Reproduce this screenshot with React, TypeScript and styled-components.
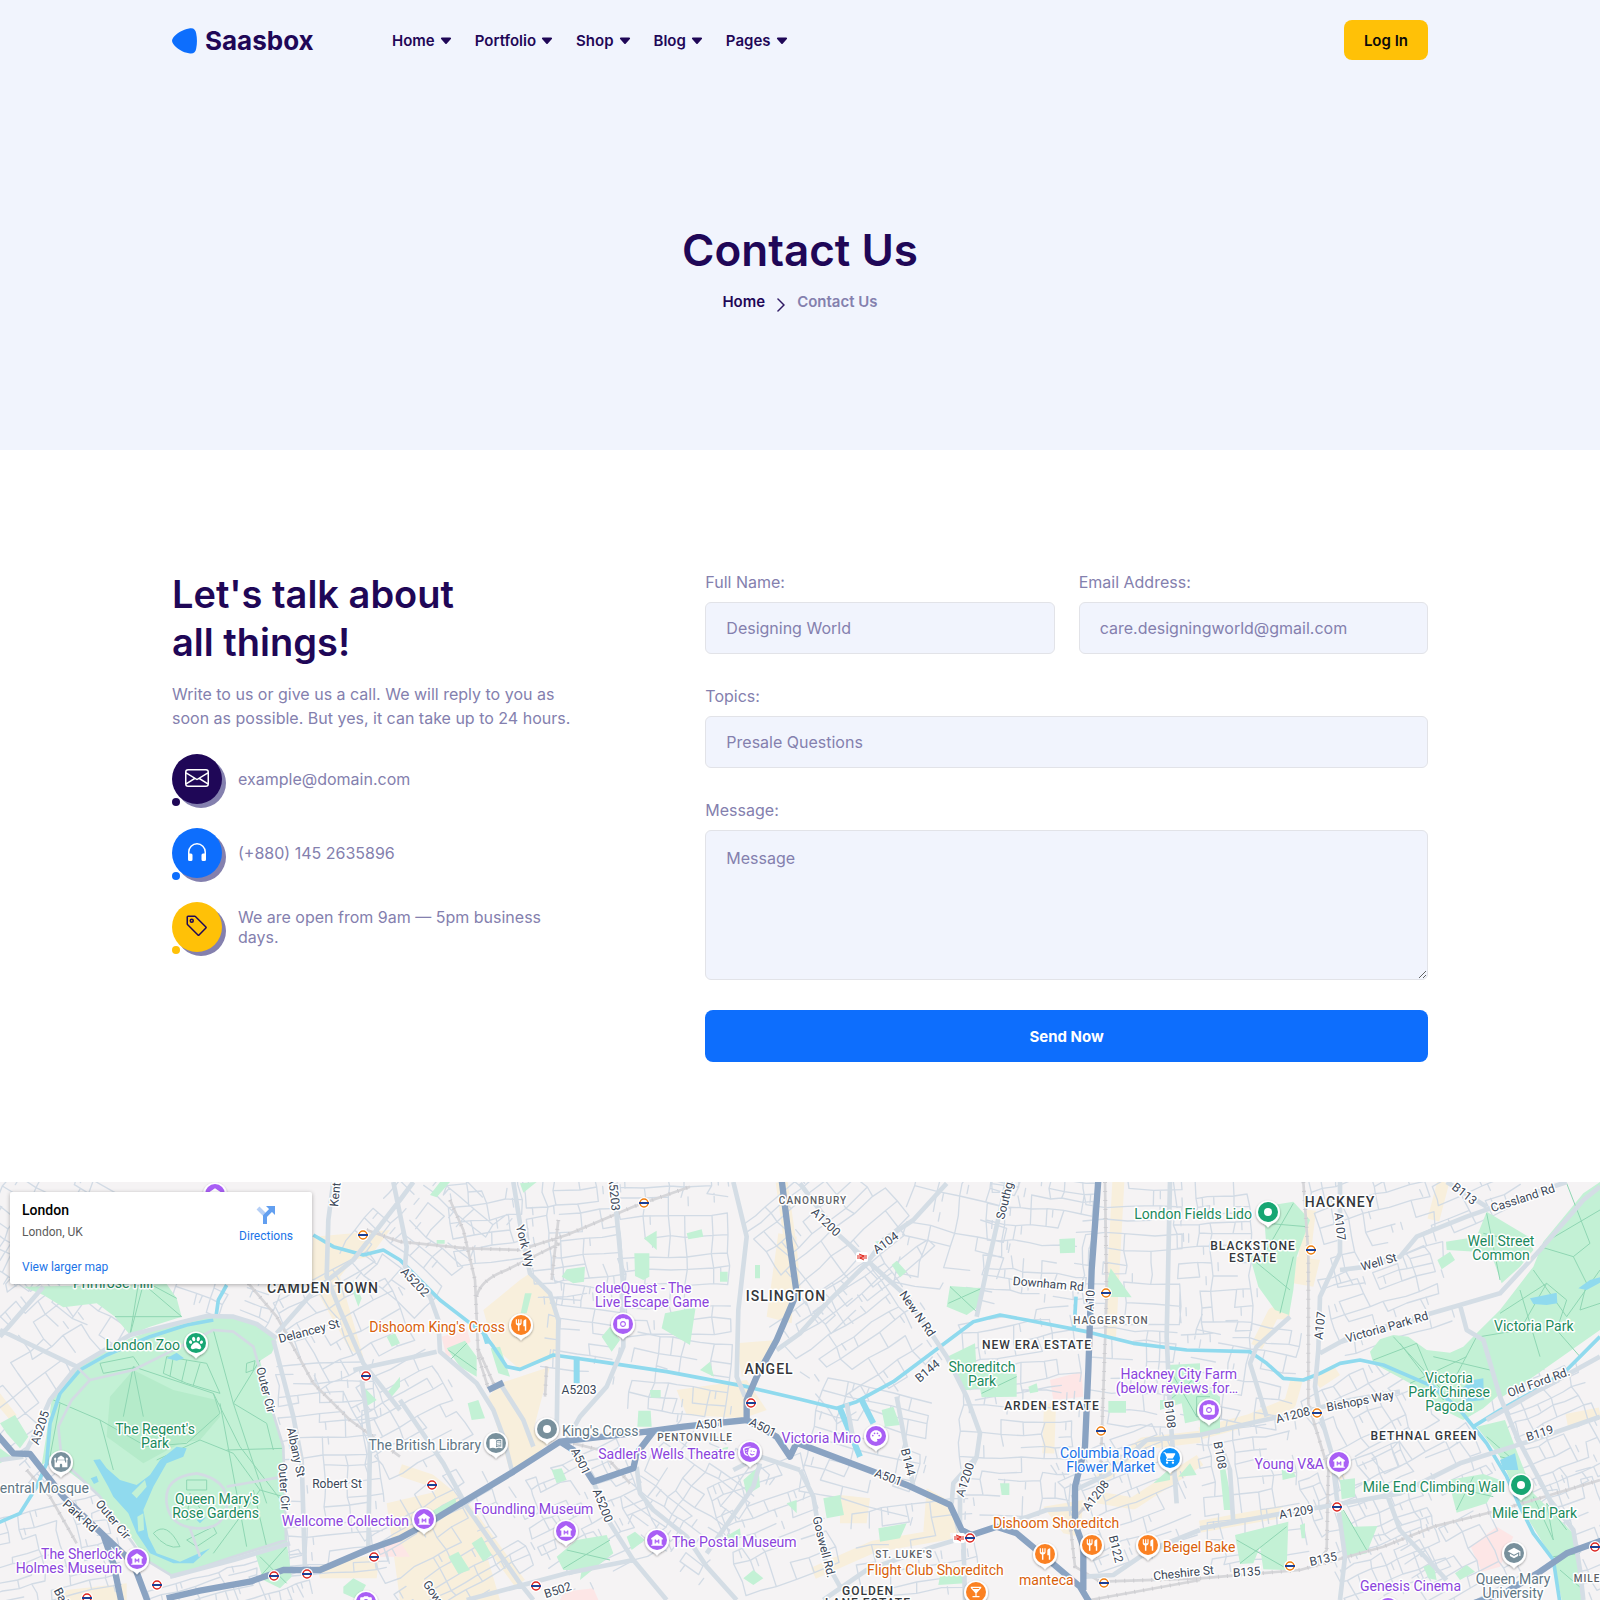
import React from "react";
import styled, { createGlobalStyle } from "styled-components";
import {
  BsCaretDownFill,
  BsChevronRight,
  BsEnvelope,
  BsHeadphones,
  BsTag,
} from "react-icons/bs";
import {
  MdLocalBar,
  MdMenuBook,
  MdMosque,
  MdMuseum,
  MdPalette,
  MdPhotoCamera,
  MdRestaurant,
  MdSchool,
  MdShoppingCart,
} from "react-icons/md";
import { FaPaw, FaTheaterMasks } from "react-icons/fa";
import type { IconType } from "react-icons";

const color = {
  ink: "#1f0757",
  muted: "#8480ae",
  wash: "#f1f4fd",
  blue: "#0d6efd",
  yellow: "#ffc107",
  line: "#e2e3e8",
};

const GlobalStyle = createGlobalStyle`
  * { box-sizing: border-box; }
  body {
    margin: 0;
    background: #fff;
    color: ${color.muted};
    font-family: Inter, "Liberation Sans", sans-serif;
    font-size: 16px;
    line-height: 24px;
  }
  h1, h2, p, ul, ol { margin: 0; padding: 0; }
  ul, ol { list-style: none; }
  a { color: inherit; text-decoration: none; }
`;

const Container = styled.div`
  width: 100%;
  max-width: 1280px;
  margin: 0 auto;
  padding: 0 12px;
`;

/* ---------- header ---------- */

const Header = styled.header`
  background: ${color.wash};
`;

const Bar = styled(Container)`
  display: flex;
  align-items: center;
  min-height: 80px;
`;

const Brand = styled.a`
  display: flex;
  align-items: center;
  gap: 8px;
  width: 220px;
  padding-top: 2px;
  color: ${color.ink};
  font-size: 26px;
  font-weight: 700;
  line-height: 32px;
`;

const NavList = styled.ul`
  display: flex;
  gap: 22px;
`;

const NavLink = styled.a`
  display: flex;
  align-items: center;
  gap: 4px;
  padding-top: 2px;
  color: ${color.ink};
  font-size: 15px;
  font-weight: 600;
`;

const LoginButton = styled.button`
  height: 40px;
  margin-left: auto;
  padding: 2px 20px 0;
  border: 0;
  border-radius: 8px;
  background: ${color.yellow};
  color: #0b0b0b;
  font: inherit;
  font-size: 15px;
  font-weight: 600;
`;

/* ---------- page title ---------- */

const Hero = styled.section`
  display: flex;
  flex-direction: column;
  align-items: center;
  gap: 10px;
  padding: 140px 12px 136px;
  background: ${color.wash};
  text-align: center;
`;

const Title = styled.h1`
  color: ${color.ink};
  font-size: 44px;
  font-weight: 600;
  line-height: 60px;
`;

const Crumbs = styled.ol`
  display: flex;
  align-items: center;
  gap: 8px;
  font-size: 15px;
  font-weight: 600;
  color: ${color.muted};

  a { color: ${color.ink}; }
  svg { display: block; margin-top: 6px; color: ${color.ink}; stroke: currentColor; stroke-width: 0.5px; }
`;

/* ---------- contact section ---------- */

const Contact = styled(Container)`
  display: grid;
  grid-template-columns: repeat(12, minmax(0, 1fr));
  column-gap: 24px;
  padding-top: 120px;
  padding-bottom: 120px;
`;

const Intro = styled.section`
  grid-column: span 5;
`;

const Heading = styled.h2`
  margin-bottom: 16px;
  color: ${color.ink};
  font-size: 38px;
  font-weight: 600;
  line-height: 48px;
`;

const Lead = styled.p`
  max-width: 400px;
  margin-bottom: 24px;
`;

const ContactList = styled.ul`
  display: grid;
  gap: 24px;
  max-width: 380px;
`;

const ContactRow = styled.li`
  display: flex;
  align-items: center;
  gap: 16px;
  line-height: 20px;
`;

const Badge = styled.span<{ $fill: string; $ink?: string }>`
  position: relative;
  display: grid;
  place-items: center;
  flex: none;
  width: 50px;
  height: 50px;
  border-radius: 50%;
  background: ${(p) => p.$fill};
  box-shadow: 4px 4px 0 ${color.muted};
  color: ${(p) => p.$ink ?? "#fff"};
  font-size: 24px;

  svg { display: block; margin-bottom: 2px; }

  &::after {
    content: "";
    position: absolute;
    left: 0;
    bottom: -2px;
    width: 8px;
    height: 8px;
    border-radius: 50%;
    background: ${(p) => p.$fill};
  }
`;

const Form = styled.form`
  grid-column: span 7;
  display: grid;
  grid-template-columns: 1fr 1fr;
  column-gap: 24px;
  row-gap: 30px;
`;

const Field = styled.div<{ $wide?: boolean }>`
  display: flex;
  flex-direction: column;
  gap: 8px;
  min-width: 0;
  grid-column: ${(p) => (p.$wide ? "1 / -1" : "auto")};
`;

const controlStyle = `
  width: 100%;
  padding: 15px 20px;
  border: 1px solid ${color.line};
  border-radius: 6px;
  outline: 0;
  background: ${color.wash};
  color: ${color.ink};
  font: inherit;

  &::placeholder { color: ${color.muted}; opacity: 1; }
`;

const Input = styled.input`
  ${controlStyle}
  height: 52px;
`;

const TextArea = styled.textarea`
  ${controlStyle}
  display: block;
  height: 150px;
  resize: vertical;
`;

const SendButton = styled.button`
  grid-column: 1 / -1;
  height: 52px;
  padding: 2px 20px 0;
  border: 0;
  border-radius: 8px;
  background: ${color.blue};
  color: #fff;
  font: inherit;
  font-size: 15px;
  font-weight: 700;
`;

/* ---------- map ---------- */

const MapFrame = styled.section`
  position: relative;
  height: 418px;
  overflow: hidden;
  background: #f5f3f4;
  font-family: Roboto, "Liberation Sans", sans-serif;
`;

const MapDrawing = styled.svg`
  display: block;
  width: 100%;
  height: 100%;
`;

const MapText = styled.text<{ $size: number; $weight: number; $track: number }>`
  font-size: ${(p) => p.$size}px;
  font-weight: ${(p) => p.$weight};
  letter-spacing: ${(p) => p.$track}px;
  paint-order: stroke;
  stroke: #fff;
  stroke-width: 3px;
  stroke-linejoin: round;
`;

const MapCard = styled.div`
  position: absolute;
  top: 10px;
  left: 10px;
  display: flex;
  justify-content: space-between;
  width: 302px;
  min-height: 92px;
  padding: 9px 19px 9px 12px;
  border-radius: 2px;
  background: #fff;
  box-shadow: 0 1px 4px rgba(0, 0, 0, 0.3);
  font-size: 12px;
  line-height: 16px;
`;

const Place = styled.div`
  display: flex;
  flex-direction: column;
  color: #5b5b5b;

  strong { margin-bottom: 5px; color: #000; font-size: 14px; font-weight: 500; line-height: 18px; }
  a { margin-top: auto; color: #1a73e8; }
`;

const Directions = styled.a`
  display: flex;
  flex-direction: column;
  align-items: center;
  align-self: flex-start;
  gap: 2px;
  padding-top: 3px;
  color: #1a73e8;
`;

/* Terrain is plotted on a grid three times finer than the labels. */
const PARKS = [
  "M70 350L500 342L530 385L545 440L450 470L390 495L345 440L290 400L190 412L130 375Z",
  "M125 885L140 790L155 690L240 585L390 505L520 460L620 440L700 445L770 460L830 515L815 550L780 572L815 700L850 830L862 1120L700 1160L520 1220L440 1170L400 1110L280 960L200 900L150 870Z",
  "M765 1150L860 1115L875 1220L840 1255L790 1230Z",
  "M0 760L45 735L85 800L60 835L20 790Z M0 835L35 860L0 880Z",
  "M1095 655L1130 690L1095 712Z M1160 670L1200 620L1200 650L1175 680Z M1030 1250L1060 1225L1098 1245L1075 1290L1030 1270Z",
  "M1060 330L1085 385L1075 410L1060 370Z M1160 500L1185 490L1200 520L1175 530Z",
  "M1560 40L1610 36L1570 68Z M1290 75L1320 36L1350 36L1310 82Z M1310 210H1334V221H1310Z",
  "M1970 182V240L1932 205Z M1903 250H1948V320L1930 330L1905 318Z M1685 320L1700 298L1755 290L1752 335L1720 340Z",
  "M2060 190L2105 178L2110 200L2065 208Z M2160 305H2183V335H2160Z M2265 285H2280V325H2265Z",
  "M1995 430L2087 412L2070 525L1985 475Z M1805 500L1830 470L1860 510L1835 545Z M2100 600L2130 575L2142 620Z",
  "M1340 535L1395 512L1430 560L1430 620L1380 590Z M1472 535L1500 530L1530 620L1495 610Z M1575 370H1595L1580 430H1562Z",
  "M1915 722H1952L1955 770H1912Z M1950 660H1982V683H1952Z M1403 700L1435 690L1455 745L1415 750Z",
  "M1285 1030L1365 985L1375 1015L1310 1040Z M1655 900L1685 895L1700 930L1670 940Z",
  "M1670 1160L1730 1110L1820 1095L1840 1150L1740 1230L1745 1200L1690 1200Z",
  "M1415 1120L1445 1100L1475 1155L1450 1175Z M1345 1160L1375 1145L1410 1200L1375 1212Z",
  "M1880 1100L1905 1085L1935 1110L1895 1140Z M2140 840L2185 830L2175 870L2145 865Z M2230 930L2275 890L2280 950L2240 975Z",
  "M2150 1115L2220 1075L2222 1095L2160 1120Z M2230 1225L2260 1200L2290 1225L2260 1245Z M2360 1000L2390 990L2390 1030Z",
  "M3332 295L3395 382L3310 380Z M2850 348L2945 355L2935 410L2900 435L2840 410Z M3178 207L3225 205V248L3180 250Z",
  "M2842 560L2925 520L2930 605L3050 612L3050 680L2945 682L2940 655L2885 662Z M3325 693H3378V728H3325Z",
  "M2645 720L2680 710L2700 765L2655 770Z M2470 985L2520 975L2532 1035L2480 1045Z M2635 1075L2720 1060L2700 1105L2640 1115Z",
  "M2675 285L2690 272L2720 305L2700 322Z M3085 650L3110 640L3115 665L3090 670Z M2825 1190L2895 1188L2895 1240L2815 1245Z",
  "M3505 585L3600 580L3600 750L3555 760L3545 700L3480 720L3480 690H3510Z M3600 640L3660 680L3660 790L3600 795Z",
  "M3000 940H3028V975H3005Z M2625 215L2650 210L2660 240Z M3460 940L3510 895L3510 930Z M3535 920L3570 880L3590 915Z",
  "M3790 110L3880 95L3930 150L3890 260L3880 360L3867 435L3825 420L3775 350L3750 260L3800 240Z",
  "M4460 125L4585 200L4600 240L4560 290L4505 340L4480 270L4430 245L4340 240L4338 215L4430 200Z",
  "M4800 36L4750 70L4630 215L4600 290L4500 420L4430 490L4470 580L4505 682L4600 620L4800 480Z",
  "M4110 545L4140 508L4180 495L4225 500L4280 540L4350 548L4390 530L4430 490L4475 590L4502 670L4450 715L4390 750L4330 720L4230 640L4120 580Z",
  "M4430 770L4515 750L4545 830L4600 970L4720 1090L4750 1290L4685 1290L4660 1170L4580 1040L4500 860Z",
  "M3705 1095L3865 1055L3860 1200L3790 1198L3780 1130L3760 1180L3720 1182Z M4020 1010L4060 1070L4132 1068L4100 1150L4035 1165Z",
  "M4345 930L4450 912L4500 930L4460 1000L4370 1028Z M4020 930L4065 925V980L4025 988Z M4312 270L4350 245L4365 270L4325 298Z",
  "M4270 1190L4300 1180L4310 1230L4285 1225Z M3845 900L3875 895L3888 920L3848 930Z M4365 1210L4400 1185L4425 1205L4380 1230Z",
  "M3660 900L3675 890L3700 1020H3672Z M3600 1025L3630 1010Z M3900 1065L3915 1060V1105H3905Z",
];

const COMMERCIAL = [
  "M1450 420L1560 330L1590 310L1670 400L1680 560L1560 598L1480 530Z",
  "M1500 640L1650 590L1600 780L1680 790L1600 860L1530 905L1465 680Z",
  "M2030 660L2240 630L2300 720L2230 745L2060 735Z",
  "M2210 520L2330 510L2290 600L2225 620Z",
  "M2335 190L2390 200L2375 460L2300 440Z",
  "M2780 955L2860 1000L2885 1090L2770 1085Z",
  "M2520 975L2610 985L2600 1060L2520 1060Z",
  "M940 200L1170 180L1110 260L1060 270L1020 320L1090 560L1050 540L960 380L930 360Z",
  "M1160 1000L1330 960L1420 1020L1500 1290L1200 1290Z",
  "M3130 1010L3250 990L3240 1100L3190 1090Z",
  "M0 670L50 735L30 750L0 715Z",
  "M200 1260L380 1240L380 1290H180Z",
  "M950 1190L1140 1150L1130 1225L960 1225Z",
  "M3890 260L3960 270L3940 350L3880 340Z",
];

const HOSPITALS = [
  "M3150 630L3245 605L3250 680L3160 690Z",
  "M1325 500L1400 475L1412 515L1340 565Z",
  "M4412 1130L4490 1070L4540 1100L4500 1190L4445 1205Z",
  "M1690 1265L1780 1255L1795 1290H1680Z",
  "M1130 1130L1200 1115L1230 1160L1140 1160Z",
];

const SHOPPING_STREETS =
  "M2345 36L2372 230L2385 370 M1200 900L1290 930L1400 1020L1560 1240 M3355 36L3330 500 M3600 790L3750 750L3870 700L3890 630 M3600 1070L3850 1025 M3150 700L3145 850 M3870 430L3820 430L3770 530 M3990 860L4020 930 M3300 930L3430 820L3600 800 M3280 980L3400 1000L3600 870 M3930 120L3905 330 M3950 640L4010 600 M4300 150L4330 36 M4700 750L4800 730 M2440 1210L2620 1130L2850 1090";

const MAIN_ROADS =
  "M70 860L110 780L150 690L230 590L390 495L620 438L700 440L770 462L830 505 M830 490L940 365L1060 270L1200 90L1240 36 M1000 36L985 150L980 320L1020 420L1090 580L1200 720 M820 510L880 740L905 870L915 1200 M1085 630L1110 800L1105 1140 M1180 36L1220 230L1215 290L1290 380L1315 450L1320 545L1430 640L1480 720L1510 800L1535 900 M1060 600L1200 570L1310 545 M1540 36L1560 160L1590 310L1650 370L1675 450L1670 790 M1840 36L1855 190L1870 350L1870 530L1820 650L1740 740L1700 810 M2200 36L2240 200L2215 420L2210 620L2235 680 M1500 640L1570 750L1600 830 M1200 690L1330 880L1400 1010L1560 1240L1600 1290 M1780 935L1830 1060L1900 1170L2000 1290 M1910 890L1920 970L1960 1020L2060 1100L2120 1190L2210 1290 M2400 40L2510 190L2600 270L2710 370L2800 500L2840 560L2900 680L2940 790L2930 860L2860 940L2855 1000 M2930 860L2880 970L2880 1080 M2840 40L2740 150L2650 210L2600 280L2480 400L2400 490L2330 540 M3020 36L2960 300L2930 440 M3510 36L3500 500L3510 720L3530 1000 M4020 36L4020 250L3960 380L3955 540L3945 650L3960 730L3995 850L4010 980L4035 1160L4020 1290 M3225 960L3330 910L3440 810L3600 795L3750 760L3930 720L4050 690L4200 665 M3600 1075L3850 1030L4000 1005L4200 970L4380 880L4600 810L4800 740 M4020 300L4100 290L4200 260L4250 200L4400 140L4600 70L4700 36 M3960 550L4050 500L4380 405L4500 370L4620 240L4750 90L4800 50 M4380 405L4400 480L4450 510L4500 680L4550 800L4650 990L4720 1080L4740 1200L4750 1290 M2470 1290L2600 1200L2800 1130L2900 1100 M2400 900L2440 980L2470 1160L2520 1250L2560 1290 M3255 1220L3340 1215L3450 1140L3600 1080 M1400 1290L1700 1210L1900 1170 M0 480L230 590 M0 500L130 350 M0 870L70 860 M3870 440L3770 530L3750 580L3800 740 M3000 1070L3140 1020L3225 1015 M2200 900L2280 860L2400 900 M2120 1150L2260 950L2280 880 M2890 1100L2895 1290 M2690 680L2740 950 M4340 1230L4200 1080L4160 970 M4460 750L4600 670L4800 560 M4460 110L4380 60L4340 36 M3700 1060L3690 900L3660 820 M2540 700L2560 810 M510 1220L700 1170L870 1120";

const PARK_ROADS =
  "M230 590L270 630L400 600L560 520L640 480L700 485L760 530L780 600L850 830L858 1110L700 1160L520 1220L430 1165L300 980L185 870L175 770L215 690L270 630 M500 1000Q490 920 590 910Q690 930 680 1010Q670 1080 590 1075Q510 1070 500 1000 M680 950L850 920 M570 1075L600 1160";

const TRUNK_ROADS =
  "M-20 780L40 850L90 852L190 980L310 1095L400 1180L445 1300 M310 1095L340 1180L365 1300 M500 1285L600 1262L750 1235L850 1200L960 1200L1100 1140L1200 1105L1300 1050L1540 905L1680 815L1940 785L2050 770L2240 750L2240 690L2270 620L2330 510L2390 370L2370 230L2345 30 M2240 750L2330 800L2370 860L2390 818L2620 905L2720 945L2850 1005L2885 1080L2915 1095L2990 1070L3050 1090L3140 1165L3240 1250L3270 1300 M1680 815L1720 840L1780 935L1900 895L1910 850L1960 785 M3295 30L3275 300L3265 600L3255 830L3225 950L3225 1060L3250 1130L3250 1260 M4810 1110L4700 1150L4620 1205L4520 1265L4420 1300 M1465 660L1510 638";

const CANALS =
  "M940 195L1000 230L1090 255L1150 240L1200 270L1320 390L1450 490L1480 530L1520 590L1560 598L1660 555L1800 575L2000 605L2240 650L2400 688L2510 715L2570 695L2680 635L2820 530L2920 455L3000 435L3080 450L3260 485L3400 520L3560 540L3750 545L3800 580L3850 625L3910 630L3960 610L4020 580L4080 570L4150 585L4300 650L4380 720L4460 820L4520 920L4560 1010L4600 1090L4660 1170L4680 1300 M4420 770L4500 720L4600 665L4700 600L4800 500 M3228 380L3222 480 M-10 1060L60 1030L110 950L140 880L150 760L180 670L240 600L320 555L450 500L560 465L640 450 M648 440L655 390L680 345";

const BASINS = "M2520 715L2580 860 M2585 690L2620 760 M1730 560V640";

const LAKES = [
  "M320 895L360 930L410 945L450 915L480 870L530 830L560 835L550 860L500 880L460 950L430 1020L445 1100L470 1150L540 1175L630 1135L580 1180L520 1180L450 1150L410 1090L385 1030L340 980L325 950L280 870L300 868Z",
  "M4590 385L4670 368L4672 400L4640 405L4600 402Z",
  "M4735 355L4770 330L4800 322V338L4760 360Z",
  "M4420 630L4450 625L4452 690L4400 695L4370 665Z",
  "M4500 870L4545 850L4555 900L4510 900Z",
  "M272 925L290 918L296 935L282 942Z M500 565L530 548L552 565L530 572Z M590 1050L620 1040L600 1060Z",
  "M1445 490L1460 490L1475 520L1455 522Z",
];

const RAILWAYS =
  "M1100 180L1200 215L1400 235L1560 240L1700 195L1900 110L2070 50 M1350 90L1390 180L1425 330L1435 560L1465 655 M1435 540L1485 650 M1430 380Q1440 330 1520 300L1600 260L1680 220 M1675 150L1655 330 M745 340L830 440L940 640L1050 750L1200 860 M3910 36L3925 250L3925 700L3985 900L3980 1140L3950 1180 M3600 1225L3900 1200L4150 1130L4300 1070L4500 1020L4800 930 M3315 36L3320 370L3300 960L3210 1060L3225 1190L3300 1235L3600 1225 M80 900L150 980L230 1120 M1640 590L1635 680 M1720 820L1800 840L1890 940 M3270 1290L3600 1230";

const PARK_PATHS =
  "M345 440L545 440L430 342L390 495L415 342 M450 342L530 385 M400 590L370 740 M400 590L430 740 M400 590L640 670L720 830L850 1000 M640 480L700 700L800 1000 M700 700L780 570 M160 690L300 750L440 830L560 820L660 730L640 670 M300 750L340 900 M470 870L600 810L700 850L780 960L850 980 M780 960L640 1150 M660 700L740 1130 M760 960L800 1130 M300 580L400 560L420 590L310 610Z M500 560L620 580L660 670L560 640L490 610Z M520 560L510 620 M560 570L545 635 M600 580L580 645 M560 1110L640 1070L650 1090L590 1130Z M460 1090Q500 1050 540 1130Q500 1140 460 1090 M560 930H620V960H560Z M570 970L610 1030L560 1050Z M740 580L765 572L760 600L738 608Z M180 700L150 860 M700 700L800 760L820 840 M780 1160L860 1240 M860 1130L780 1220 M680 840L850 835 M4120 570L4250 520L4300 640 M4180 500L4380 720 M4200 520L4330 690L4430 500 M4300 560L4470 600 M4230 640L4400 560 M4620 230L4720 260L4770 220L4700 40 M4630 220L4800 120 M4500 430L4640 340L4700 390L4670 480L4740 560 M4600 300L4700 440L4800 300 M4560 360L4620 560 M4440 500L4560 480L4640 340 M4720 260L4760 340L4740 420L4800 400 M4450 190L4580 220 M4460 130L4500 330 M3800 240L3880 100 M3800 160L3920 170 M3870 360L3760 270 M3840 430L3880 260 M4460 800L4540 870L4500 860 M4600 980L4660 1110L4640 1000L4700 1080 M4660 1160L4740 1150 M4680 1200L4750 1260 M4350 950L4480 980 M4370 1020L4420 920 M2850 350L2935 430 M2845 400L2945 355 M2845 570L2890 650 M2945 670L3050 620 M1345 540L1430 600 M1400 520L1350 570 M1690 1195L1830 1110 M1700 1140L1830 1170 M3710 1110L3850 1190 M3720 1180L3860 1070 M4030 1020L4100 1140 M3510 600L3590 740 M3510 690L3600 610 M3630 680H3590V740H3650";

type District = [x: number, y: number, w: number, h: number, turn: number, step: number];

const DISTRICTS: District[] = [
  [110, 620, 420, 560, -38, 50],
  [220, 240, 560, 420, 32, 54],
  [660, 360, 340, 160, 22, 46],
  [90, 1180, 520, 300, -14, 40],
  [700, 1270, 520, 150, -16, 36],
  [1000, 900, 300, 640, -4, 44],
  [1040, 460, 330, 320, -28, 50],
  [1270, 200, 330, 420, 40, 48],
  [1250, 740, 320, 330, -28, 46],
  [1360, 1120, 460, 380, -30, 46],
  [1480, 160, 260, 320, -8, 52],
  [1740, 200, 300, 380, -6, 44],
  [1760, 480, 240, 260, 8, 42],
  [2040, 260, 360, 480, -2, 52],
  [2060, 640, 340, 260, 8, 44],
  [1770, 1040, 360, 360, -25, 42],
  [2090, 1000, 380, 400, 36, 46],
  [2350, 1080, 340, 400, -20, 46],
  [2530, 200, 420, 440, -40, 48],
  [2590, 500, 420, 360, -34, 46],
  [2620, 840, 380, 360, 14, 46],
  [2780, 1150, 420, 300, -8, 44],
  [2880, 200, 340, 460, 12, 52],
  [3130, 180, 340, 400, 6, 46],
  [3080, 560, 360, 260, -10, 44],
  [3050, 850, 340, 380, 2, 44],
  [3400, 240, 300, 480, 1, 50],
  [3400, 640, 280, 320, 3, 48],
  [3400, 1000, 360, 400, -22, 42],
  [3650, 260, 240, 480, -2, 48],
  [3730, 620, 320, 320, 10, 46],
  [3780, 980, 340, 420, -8, 44],
  [4140, 150, 360, 340, -16, 44],
  [4170, 400, 360, 260, -18, 46],
  [4420, 90, 300, 180, -24, 44],
  [4140, 750, 380, 320, -28, 48],
  [4150, 1060, 380, 420, -22, 42],
  [4400, 1180, 320, 260, -28, 46],
  [4680, 760, 320, 440, -24, 42],
  [4770, 1080, 180, 360, -20, 44],
  [4400, 870, 220, 200, -24, 48],
];

/* Lays a broken, slightly uneven lattice of side streets over one district. */
function streets([cx, cy, w, h, turn, step]: District): string {
  let seed = cx * 31 + cy * 17 + step;
  const next = () => {
    seed = (seed * 1103515245 + 12345) % 2147483648;
    return seed / 2147483648;
  };
  const cuts = (span: number, gap: number) => {
    const out: number[] = [];
    for (let v = -span / 2; v < span / 2; v += gap * (0.6 + next() * 0.9)) out.push(v);
    return out;
  };
  const us = cuts(w, step * 1.15);
  const vs = cuts(h, step * 0.85);
  const nodes = vs.map((v) =>
    us.map((u) => [u + (next() - 0.5) * step * 0.3, v + (next() - 0.5) * step * 0.22]),
  );
  const a = (turn * Math.PI) / 180;
  const place = ([u, v]: number[]) =>
    `${Math.round(cx + u * Math.cos(a) - v * Math.sin(a))} ${Math.round(cy + u * Math.sin(a) + v * Math.cos(a))}`;
  let d = "";
  for (let i = 0; i < vs.length; i++) {
    for (let j = 0; j < us.length; j++) {
      const p = nodes[i][j];
      if (j + 1 < us.length && next() < 0.74) d += `M${place(p)}L${place(nodes[i][j + 1])}`;
      if (i + 1 < vs.length && next() < 0.6) d += `M${place(p)}L${place(nodes[i + 1][j])}`;
      if (next() < 0.16) d += `M${place([p[0] + step * 0.4, p[1]])}l${Math.round(-Math.sin(a) * step * 0.5)} ${Math.round(Math.cos(a) * step * 0.5)}`;
    }
  }
  return d;
}

const SIDE_STREETS = DISTRICTS.map(streets).join("");

const tone = {
  park: "#1b8a5c",
  poi: "#8b44dc",
  food: "#d95f0b",
  civic: "#5f7785",
  shop: "#1a73e8",
  area: "#35383c",
  minor: "#5d6166",
  road: "#3a4657",
};

type Kind = keyof typeof tone;
type Anchor = "start" | "middle" | "end";
type Label = [text: string, x: number, y: number, kind: Kind, anchor?: Anchor, turn?: number];

const LABELS: Label[] = [
  ["Primrose Hill", 113, 118, "park", "middle"],
  ["London Zoo", 180, 180, "park", "end"],
  ["The Regent's", 155, 264, "park", "middle"],
  ["Park", 155, 278, "park", "middle"],
  ["Queen Mary's", 259, 334, "park", "end"],
  ["Rose Gardens", 259, 348, "park", "end"],
  ["Central Mosque", 89, 323, "civic", "end"],
  ["The Sherlock", 122, 389, "poi", "end"],
  ["Holmes Museum", 122, 403, "poi", "end"],
  ["Wellcome Collection", 409, 356, "poi", "end"],
  ["The British Library", 481, 280, "civic", "end"],
  ["Dishoom King's Cross", 505, 162, "food", "end"],
  ["clueQuest - The", 595, 123, "poi"],
  ["Live Escape Game", 595, 137, "poi"],
  ["King's Cross", 562, 266, "civic"],
  ["Sadler's Wells Theatre", 735, 289, "poi", "end"],
  ["Foundling Museum", 474, 344, "poi"],
  ["The Postal Museum", 672, 377, "poi"],
  ["Victoria Miro", 861, 273, "poi", "end"],
  ["Shoreditch", 982, 202, "park", "middle"],
  ["Park", 982, 216, "park", "middle"],
  ["London Fields Lido", 1252, 49, "park", "end"],
  ["Hackney City Farm", 1237, 209, "poi", "end"],
  ["(below reviews for…", 1238, 223, "poi", "end"],
  ["Columbia Road", 1155, 288, "shop", "end"],
  ["Flower Market", 1155, 302, "shop", "end"],
  ["Dishoom Shoreditch", 993, 358, "food"],
  ["Flight Club Shoreditch", 867, 405, "food"],
  ["manteca", 1019, 415, "food"],
  ["Beigel Bake", 1163, 382, "food"],
  ["Young V&A", 1324, 299, "poi", "end"],
  ["Genesis Cinema", 1360, 421, "poi"],
  ["Mile End Climbing Wall", 1505, 322, "park", "end"],
  ["Mile End Park", 1492, 348, "park"],
  ["Queen Mary", 1513, 414, "civic", "middle"],
  ["University", 1513, 428, "civic", "middle"],
  ["Victoria Park", 1494, 161, "park"],
  ["Victoria", 1449, 213, "park", "middle"],
  ["Park Chinese", 1449, 227, "park", "middle"],
  ["Pagoda", 1449, 241, "park", "middle"],
  ["Well Street", 1501, 76, "park", "middle"],
  ["Common", 1501, 90, "park", "middle"],
];

type Caps = [text: string, x: number, y: number, size: number, minor?: boolean];

const DISTRICT_NAMES: Caps[] = [
  ["CAMDEN TOWN", 323, 123, 14],
  ["ISLINGTON", 786, 131, 14],
  ["ANGEL", 769, 204, 14],
  ["HACKNEY", 1340, 37, 14],
  ["NEW ERA ESTATE", 1037, 179, 12],
  ["ARDEN ESTATE", 1052, 240, 12],
  ["BETHNAL GREEN", 1424, 270, 12],
  ["BLACKSTONE", 1253, 80, 12],
  ["ESTATE", 1253, 92, 12],
  ["GOLDEN", 868, 425, 12],
  ["LANE ESTATE", 868, 437, 12],
  ["CANONBURY", 813, 34, 10, true],
  ["PENTONVILLE", 695, 271, 10, true],
  ["HAGGERSTON", 1111, 154, 10, true],
  ["ST. LUKE'S", 904, 388, 10, true],
  ["MILE END", 1600, 412, 10, true],
];

const ROAD_NAMES: Label[] = [
  ["Kentish", 338, 37, "road", "start", -84],
  ["Delancey St", 310, 165, "road", "middle", -15],
  ["A5205", 44, 259, "road", "middle", -72],
  ["Outer Cir", 262, 221, "road", "middle", 76],
  ["Albany St", 292, 283, "road", "middle", 78],
  ["Outer Cir", 280, 317, "road", "middle", 86],
  ["Robert St", 337, 318, "road", "middle", 0],
  ["Outer Cir", 110, 352, "road", "middle", 50],
  ["Park Rd", 77, 349, "road", "middle", 42],
  ["Baker St", 64, 440, "road", "middle", 62],
  ["A5202", 412, 115, "road", "middle", 46],
  ["York Wy", 521, 77, "road", "middle", 76],
  ["A5203", 610, 24, "road", "middle", 84],
  ["A5203", 579, 224, "road", "middle", 0],
  ["A501", 710, 258, "road", "middle", -4],
  ["A501", 761, 261, "road", "middle", 26],
  ["A501", 577, 293, "road", "middle", 64],
  ["A5200", 599, 337, "road", "middle", 68],
  ["B502", 559, 424, "road", "middle", -18],
  ["Gower St", 436, 434, "road", "middle", 56],
  ["A1200", 823, 55, "road", "middle", 44],
  ["A104", 888, 76, "road", "middle", -36],
  ["Southgate Rd", 1004, 50, "road", "start", -76],
  ["New N Rd", 914, 146, "road", "middle", 55],
  ["B144", 930, 204, "road", "middle", -40],
  ["Downham Rd", 1048, 118, "road", "middle", 5],
  ["A10", 1094, 131, "road", "middle", -86],
  ["B144", 904, 293, "road", "middle", 76],
  ["A501", 887, 311, "road", "middle", 20],
  ["A1200", 969, 311, "road", "middle", -72],
  ["A1208", 1099, 328, "road", "middle", -52],
  ["Goswell Rd.", 820, 378, "road", "middle", 76],
  ["B122", 1112, 380, "road", "middle", 76],
  ["B108", 1166, 245, "road", "middle", 84],
  ["Cheshire St", 1184, 407, "road", "middle", -6],
  ["A107", 1336, 57, "road", "middle", 84],
  ["B113", 1462, 27, "road", "middle", 38],
  ["Cassland Rd", 1524, 32, "road", "middle", -18],
  ["Well St", 1380, 96, "road", "middle", -16],
  ["A107", 1324, 156, "road", "middle", -84],
  ["Victoria Park Rd", 1388, 161, "road", "middle", -16],
  ["Bishops Way", 1361, 235, "road", "middle", -11],
  ["A1208", 1294, 249, "road", "middle", -14],
  ["B108", 1216, 286, "road", "middle", 80],
  ["A1209", 1297, 346, "road", "middle", -10],
  ["B135", 1324, 393, "road", "middle", -12],
  ["B135", 1247, 406, "road", "middle", -4],
  ["Old Ford Rd.", 1540, 216, "road", "middle", -20],
  ["B119", 1541, 267, "road", "middle", -18],
];

const pinFill = {
  park: "#17a673",
  poi: "#a95ff5",
  food: "#fb8122",
  civic: "#78909c",
  shop: "#0f93fb",
};

type PinSpec = [x: number, y: number, kind: keyof typeof pinFill, Icon?: IconType];

const PINS: PinSpec[] = [
  [215, 24, "poi", MdMuseum],
  [196, 173, "park", FaPaw],
  [61, 292, "civic", MdMosque],
  [137, 389, "poi", MdMuseum],
  [366, 432, "poi", MdPhotoCamera],
  [424, 349, "poi", MdMuseum],
  [496, 273, "civic", MdMenuBook],
  [521, 155, "food", MdRestaurant],
  [623, 154, "poi", MdPhotoCamera],
  [547, 259, "civic"],
  [750, 282, "poi", FaTheaterMasks],
  [566, 361, "poi", MdMuseum],
  [657, 370, "poi", MdMuseum],
  [876, 266, "poi", MdPalette],
  [1268, 42, "park"],
  [1209, 240, "poi", MdPhotoCamera],
  [1170, 288, "shop", MdShoppingCart],
  [1045, 384, "food", MdRestaurant],
  [1092, 375, "food", MdRestaurant],
  [1148, 375, "food", MdRestaurant],
  [976, 422, "food", MdLocalBar],
  [1339, 292, "poi", MdMuseum],
  [1521, 315, "park"],
  [1514, 383, "civic", MdSchool],
  [1388, 438, "poi", MdMuseum],
];

type Stop = [x: number, y: number, ring: "#dc241f" | "#ee7c0e"];

const STOPS: Stop[] = [
  [366, 206, "#dc241f"],
  [157, 415, "#dc241f"],
  [87, 428, "#dc241f"],
  [274, 406, "#dc241f"],
  [307, 404, "#dc241f"],
  [374, 387, "#dc241f"],
  [432, 315, "#dc241f"],
  [536, 416, "#dc241f"],
  [751, 233, "#dc241f"],
  [970, 368, "#dc241f"],
  [1337, 337, "#dc241f"],
  [1595, 377, "#dc241f"],
  [363, 65, "#ee7c0e"],
  [644, 33, "#ee7c0e"],
  [1106, 123, "#ee7c0e"],
  [1101, 261, "#ee7c0e"],
  [1104, 413, "#ee7c0e"],
  [1311, 80, "#ee7c0e"],
  [1317, 243, "#ee7c0e"],
  [1290, 396, "#ee7c0e"],
];

const RAIL_STATIONS = [
  [862, 87],
  [959, 368],
];

function Pin({ spec }: { spec: PinSpec }) {
  const [x, y, kind, Icon] = spec;
  return (
    <g transform={`translate(${x} ${y})`}>
      <path
        d="M0 15.5C-2 12.500-6 11.500-8.500 9A12 12 0 1 1 8.500 9C6 11.500 2 12.500 0 15.500Z"
        fill="#fff"
        filter="url(#pin-shadow)"
      />
      <circle r="10" fill={pinFill[kind]} />
      {Icon ? <Icon x={-7} y={-7} size={14} color="#fff" /> : <circle r="4" fill="#fff" />}
    </g>
  );
}

function PlaceName({ label }: { label: Label }) {
  const [text, x, y, kind, anchor = "start", turn = 0] = label;
  return (
    <MapText
      x={x}
      y={y}
      fill={tone[kind]}
      textAnchor={anchor}
      transform={turn ? `rotate(${turn} ${x} ${y})` : undefined}
      $size={kind === "road" ? 12 : 14}
      $weight={400}
      $track={0}
    >
      {text}
    </MapText>
  );
}

function LondonMap() {
  return (
    <MapDrawing viewBox="0 12 1600 418" preserveAspectRatio="xMidYMid slice" role="img" aria-label="Map of London">
      <defs>
        <filter id="pin-shadow" x="-30%" y="-30%" width="160%" height="170%">
          <feDropShadow dx="0" dy="1" stdDeviation="1" floodOpacity="0.4" />
        </filter>
      </defs>
      <g transform="scale(0.333333)" fill="none" strokeLinejoin="round">
        <path d={COMMERCIAL.join("")} fill="#f8efdc" />
        <path d={HOSPITALS.join("")} fill="#fde6e6" />
        <path d={SHOPPING_STREETS} stroke="#f8efdc" strokeWidth="36" />
        <path d={SIDE_STREETS} stroke="#d2dbe5" strokeWidth="4" strokeLinecap="round" />
        <path d={PARKS.join("")} fill="#c3f1d5" />
        <path d="M330 680L400 600L520 660L650 690L660 740L600 810L540 820L430 880L320 800Z" fill="#b5ebca" />
        <path d={PARK_PATHS} stroke="#8fd6b3" strokeWidth="3" />
        <path d={RAILWAYS} stroke="#d6d6d9" strokeWidth="8" />
        <path d={RAILWAYS} stroke="#cdcdd1" strokeWidth="12" strokeDasharray="3 24" />
        <path d={CANALS} stroke="#90daee" strokeWidth="11" />
        <path d={BASINS} stroke="#90daee" strokeWidth="18" />
        <path d={LAKES.join("")} fill="#90daee" />
        <path d="M395 970L435 930L440 950L410 985Z M412 1040L430 1030L432 1080L415 1085Z" fill="#c3f1d5" />
        <path d={PARK_ROADS} stroke="#d3dbe3" strokeWidth="8" />
        <path d={MAIN_ROADS} stroke="#d4dde5" strokeWidth="14" />
        <path d={TRUNK_ROADS} stroke="#8aa3c2" strokeWidth="19" />
      </g>
      {STOPS.map(([x, y, ring]) => (
        <g key={`${x}-${y}`}>
          <circle cx={x} cy={y} r="6" fill="#fff" />
          <circle cx={x} cy={y} r="4" fill="#fff" stroke={ring} strokeWidth="1.500" />
          <rect x={x - 5} y={y - 1} width="10" height="2" fill="#1c3f94" />
        </g>
      ))}
      {RAIL_STATIONS.map(([x, y]) => (
        <g key={x}>
          <rect x={x - 6} y={y - 5} width="12" height="10" rx="2" fill="#fff" />
          <path
            d={`M${x - 5} ${y - 1}h10M${x - 5} ${y + 1}h10M${x - 3} ${y - 3}l5 2l-4 2l4 2`}
            fill="none"
            stroke="#e1251b"
          />
        </g>
      ))}
      {ROAD_NAMES.map((label) => (
        <PlaceName key={`${label[0]}-${label[1]}-${label[2]}`} label={label} />
      ))}
      {DISTRICT_NAMES.map(([text, x, y, size, minor]) => (
        <MapText
          key={text + y}
          x={x}
          y={y}
          fill={minor ? tone.minor : tone.area}
          textAnchor="middle"
          $size={size}
          $weight={500}
          $track={1}
        >
          {text}
        </MapText>
      ))}
      {LABELS.map((label) => (
        <PlaceName key={`${label[0]}-${label[1]}-${label[2]}`} label={label} />
      ))}
      {PINS.map((spec) => (
        <Pin key={`${spec[0]}-${spec[1]}`} spec={spec} />
      ))}
    </MapDrawing>
  );
}

/* ---------- page ---------- */

const NAV = ["Home", "Portfolio", "Shop", "Blog", "Pages"];

export default function App() {
  return (
    <>
      <GlobalStyle />
      <Header>
        <Bar>
          <Brand href="#">
            <svg width="25" height="26" viewBox="0 0 25 26" aria-hidden="true">
              <path
                d="M17 0.500C21.500-0.500 23.500 1.500 24.200 5.500C25.200 10.500 25.200 15.500 24.200 20.500C23.500 24.500 21.500 26 17 25.300C11 24.500 4.500 20.500 1.300 16C-0.400 13.700-0.400 11.800 1.300 9.500C4.500 5.200 11 1.500 17 0.500Z"
                fill={color.blue}
              />
            </svg>
            Saasbox
          </Brand>
          <nav>
            <NavList>
              {NAV.map((name) => (
                <li key={name}>
                  <NavLink href="#">
                    {name}
                    <BsCaretDownFill size={14} />
                  </NavLink>
                </li>
              ))}
            </NavList>
          </nav>
          <LoginButton type="button">Log In</LoginButton>
        </Bar>
      </Header>

      <main>
        <Hero>
          <Title>Contact Us</Title>
          <Crumbs>
            <li>
              <a href="#">Home</a>
            </li>
            <li>
              <BsChevronRight size={16} />
            </li>
            <li>Contact Us</li>
          </Crumbs>
        </Hero>

        <Contact>
          <Intro>
            <Heading>
              Let's talk about
              <br />
              all things!
            </Heading>
            <Lead>
              Write to us or give us a call. We will reply to you as soon as possible. But yes, it
              can take up to 24 hours.
            </Lead>
            <ContactList>
              <ContactRow>
                <Badge $fill={color.ink}>
                  <BsEnvelope />
                </Badge>
                example@domain.com
              </ContactRow>
              <ContactRow>
                <Badge $fill={color.blue}>
                  <BsHeadphones />
                </Badge>
                (+880) 145 2635896
              </ContactRow>
              <ContactRow>
                <Badge $fill={color.yellow} $ink={color.ink}>
                  <BsTag />
                </Badge>
                We are open from 9am — 5pm business days.
              </ContactRow>
            </ContactList>
          </Intro>

          <Form onSubmit={(event) => event.preventDefault()}>
            <Field>
              <label htmlFor="name">Full Name:</label>
              <Input id="name" type="text" placeholder="Designing World" />
            </Field>
            <Field>
              <label htmlFor="email">Email Address:</label>
              <Input id="email" type="email" placeholder="care.designingworld@gmail.com" />
            </Field>
            <Field $wide>
              <label htmlFor="topics">Topics:</label>
              <Input id="topics" type="text" placeholder="Presale Questions" />
            </Field>
            <Field $wide>
              <label htmlFor="message">Message:</label>
              <TextArea id="message" placeholder="Message" />
            </Field>
            <SendButton type="submit">Send Now</SendButton>
          </Form>
        </Contact>

        <MapFrame>
          <LondonMap />
          <MapCard>
            <Place>
              <strong>London</strong>
              London, UK
              <a href="#">View larger map</a>
            </Place>
            <Directions href="#">
              <svg width="22" height="22" viewBox="0 0 22 22" fill="none" aria-hidden="true">
                <path d="M3 4L10 11" stroke="#b5cff6" strokeWidth="4" />
                <path d="M10 20V12L16 6" stroke="#629ff0" strokeWidth="4" />
                <path d="M11 2H20V11Z" fill="#629ff0" />
              </svg>
              Directions
            </Directions>
          </MapCard>
        </MapFrame>
      </main>
    </>
  );
}
